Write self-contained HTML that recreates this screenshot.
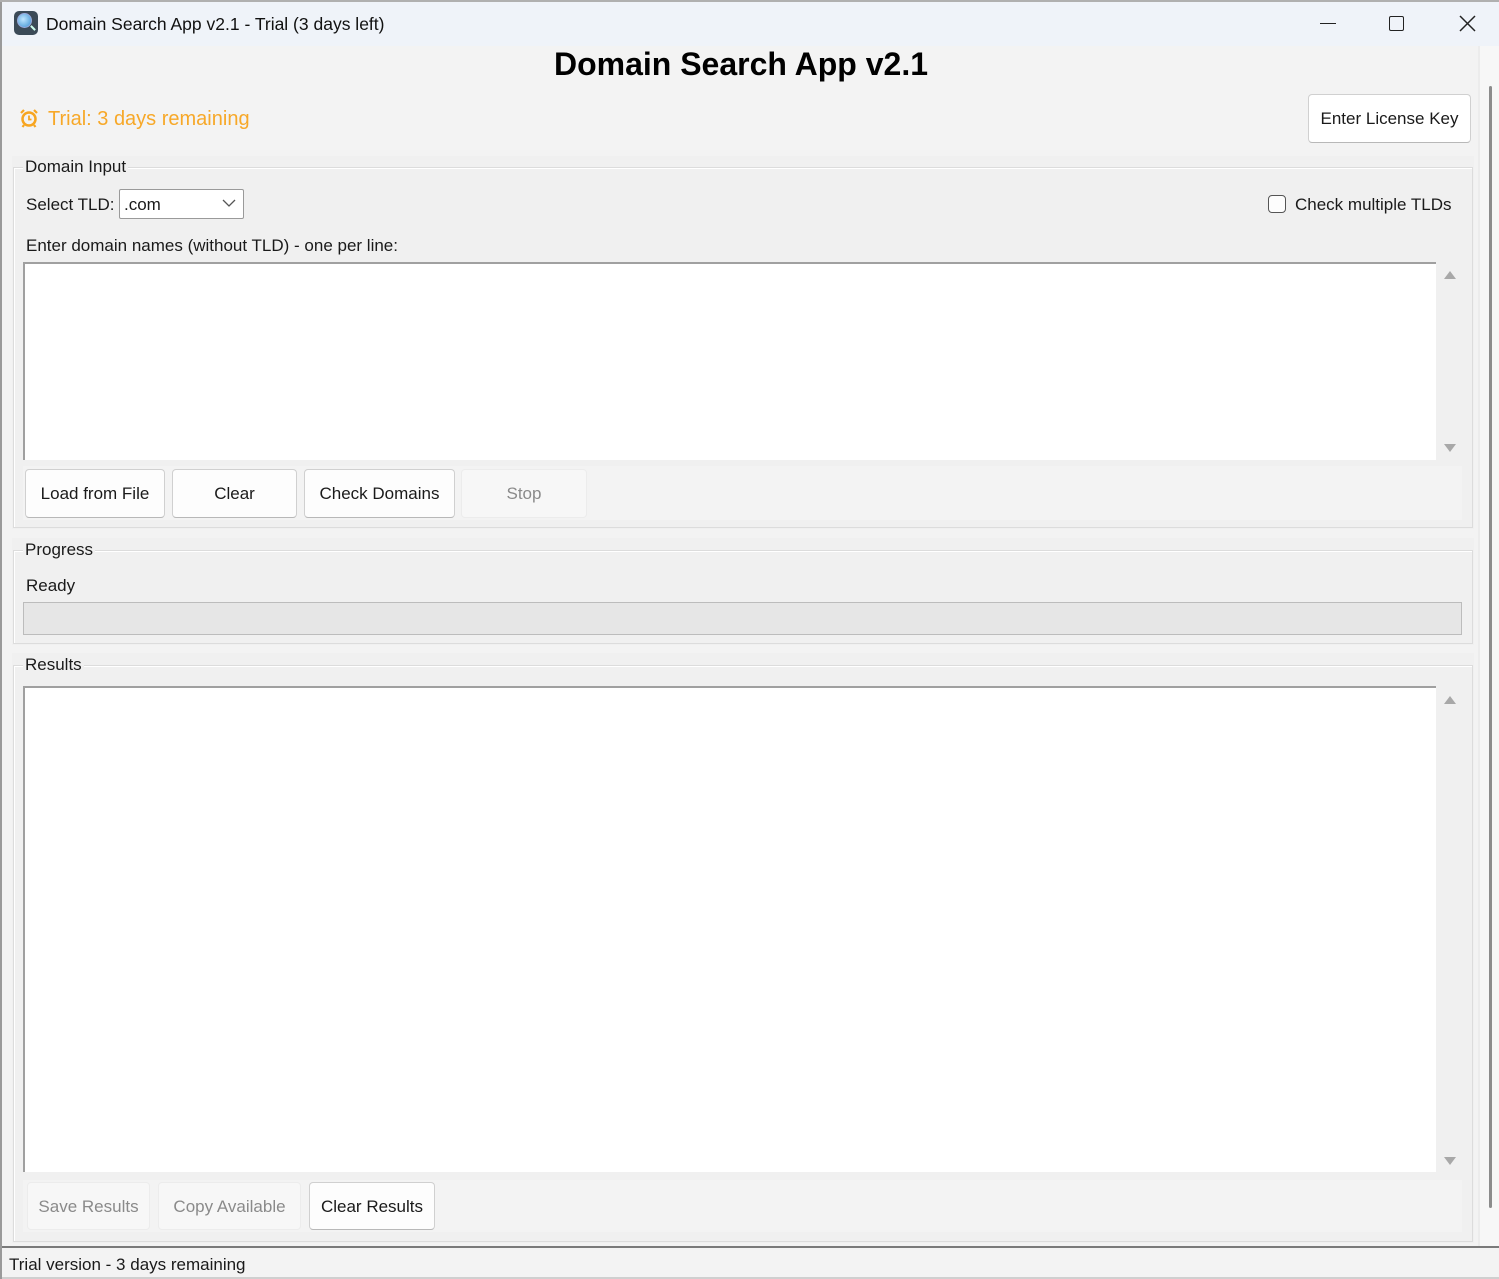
<!DOCTYPE html>
<html><head><meta charset="utf-8"><style>
*{box-sizing:border-box;margin:0;padding:0}
body{width:1499px;height:1279px;position:relative;overflow:hidden;background:#f7f7f7;font-family:"Liberation Sans",sans-serif;font-size:17px;color:#1a1a1a}
.a{position:absolute}
.t{position:absolute;white-space:nowrap;line-height:20px}
.btn{position:absolute;background:#fdfdfd;border:1px solid #d0d0d0;border-bottom-color:#b8b8b8;border-radius:4px;text-align:center;line-height:48px;font-size:17px;color:#1a1a1a}
.dis{background:#f7f7f7;border-color:#ececec;color:#8a8a8a}
.grp{position:absolute;border:1px solid #dcdcdc;box-shadow:inset 1px 1px 0 #fff}
.gl{position:absolute;background:#f0f0f0;padding:0 2px;line-height:20px;font-size:17px}
.ta{position:absolute;background:#fff;border-top:2px solid #a0a0a0;border-left:2px solid #a0a0a0}
.up{position:absolute;width:0;height:0;border-left:6px solid transparent;border-right:6px solid transparent;border-bottom:8px solid #a8a8a8}
.dn{position:absolute;width:0;height:0;border-left:6px solid transparent;border-right:6px solid transparent;border-top:8px solid #a8a8a8}
</style></head><body>
<div class="a" style="left:0;top:0;width:2px;height:1279px;background:#9a9a9a"></div>
<div class="a" style="left:0;top:0;width:1499px;height:2px;background:#b0b0b0"></div>
<div class="a" style="left:2px;top:2px;width:1497px;height:44px;background:#eff3f9"></div>
<div class="a" style="left:14px;top:11px;width:24px;height:24px;border-radius:5px;background:#3b4a57"></div>
<div class="a" style="left:17px;top:13px;width:15px;height:15px;border-radius:50%;background:radial-gradient(circle at 40% 40%,#bfe6ff,#3a8fd0);border:1px solid #9ad"></div>
<div class="a" style="left:30px;top:27px;width:6px;height:2px;background:#cfe;transform:rotate(45deg)"></div>
<div class="t" style="left:46px;top:14px;font-size:17.5px;color:#111">Domain Search App v2.1 - Trial (3 days left)</div>
<div class="a" style="left:1320px;top:23px;width:16px;height:1px;background:#222"></div>
<div class="a" style="left:1389px;top:16px;width:15px;height:15px;border:1.5px solid #222;border-radius:2px"></div>
<svg class="a" style="left:1459px;top:15px" width="17" height="17"><path d="M1 1L16 16M16 1L1 16" stroke="#222" stroke-width="1.5"/></svg>
<div class="a" style="left:2px;top:46px;width:1476px;height:1200px;background:#f3f3f3"></div>
<div class="a" style="left:1478px;top:46px;width:2px;height:1200px;background:#ececec"></div>
<div class="a" style="left:1489px;top:86px;width:3px;height:1122px;background:#8c8c8c;border-radius:2px"></div>
<div class="t" style="left:0;width:1482px;text-align:center;top:46px;font-size:32px;line-height:36px;font-weight:bold;color:#000">Domain Search App v2.1</div>
<svg class="a" style="left:19px;top:108px" width="20" height="20"><circle cx="10" cy="11" r="6.5" fill="none" stroke="#f7a520" stroke-width="2.5"/><path d="M10 7.5V11.5H12.5" stroke="#f7a520" stroke-width="1.8" fill="none"/><path d="M2 5L5 2M18 5L15 2M5 17L3.5 19M15 17L16.5 19" stroke="#f7a520" stroke-width="2.2"/></svg>
<div class="t" style="left:48px;top:108px;font-size:20px;line-height:22px;color:#f7a828">Trial: 3 days remaining</div>
<div class="btn" style="left:1308px;top:94px;width:163px;height:49px;background:#fff">Enter License Key</div>
<div class="a" style="left:12px;top:156px;width:1462px;height:373px;background:#f0f0f0"></div>
<div class="grp" style="left:13px;top:167px;width:1460px;height:361px"></div>
<div class="gl" style="left:23px;top:157px">Domain Input</div>
<div class="t" style="left:26px;top:195px">Select TLD:</div>
<div class="a" style="left:119px;top:189px;width:125px;height:30px;background:#fff;border:1px solid #9a9a9a;border-radius:2px"></div>
<div class="t" style="left:124px;top:195px">.com</div>
<svg class="a" style="left:222px;top:199px" width="14" height="9"><path d="M1 1L7 7L13 1" stroke="#555" stroke-width="1.3" fill="none"/></svg>
<div class="a" style="left:1268px;top:195px;width:18px;height:18px;border:1.5px solid #555;border-radius:4px;background:#fdfdfd"></div>
<div class="t" style="left:1295px;top:195px">Check multiple TLDs</div>
<div class="t" style="left:26px;top:236px">Enter domain names (without TLD) - one per line:</div>
<div class="ta" style="left:23px;top:262px;width:1413px;height:198px"></div>
<div class="up" style="left:1444px;top:271px"></div>
<div class="dn" style="left:1444px;top:444px"></div>
<div class="a" style="left:23px;top:466px;width:1439px;height:54px;background:#f3f3f3"></div>
<div class="btn" style="left:25px;top:469px;width:140px;height:49px">Load from File</div>
<div class="btn" style="left:172px;top:469px;width:125px;height:49px">Clear</div>
<div class="btn" style="left:304px;top:469px;width:151px;height:49px">Check Domains</div>
<div class="btn dis" style="left:461px;top:469px;width:126px;height:49px">Stop</div>
<div class="a" style="left:12px;top:538px;width:1462px;height:107px;background:#f0f0f0"></div>
<div class="grp" style="left:13px;top:550px;width:1460px;height:94px"></div>
<div class="gl" style="left:23px;top:540px">Progress</div>
<div class="t" style="left:26px;top:576px">Ready</div>
<div class="a" style="left:23px;top:602px;width:1439px;height:33px;background:#e6e6e6;border:1px solid #bcbcbc"></div>
<div class="a" style="left:12px;top:653px;width:1462px;height:590px;background:#f0f0f0"></div>
<div class="grp" style="left:13px;top:665px;width:1460px;height:577px"></div>
<div class="gl" style="left:23px;top:655px">Results</div>
<div class="ta" style="left:23px;top:686px;width:1413px;height:486px"></div>
<div class="up" style="left:1444px;top:696px"></div>
<div class="dn" style="left:1444px;top:1157px"></div>
<div class="a" style="left:23px;top:1180px;width:1439px;height:52px;background:#f3f3f3"></div>
<div class="btn dis" style="left:27px;top:1182px;width:123px;height:48px">Save Results</div>
<div class="btn dis" style="left:158px;top:1182px;width:143px;height:48px">Copy Available</div>
<div class="btn" style="left:309px;top:1182px;width:126px;height:48px">Clear Results</div>
<div class="a" style="left:2px;top:1246px;width:1497px;height:33px;background:#f3f3f3;border-top:2px solid #7a7a7a;border-bottom:2px solid #cfcfcf"></div>
<div class="t" style="left:9px;top:1255px">Trial version - 3 days remaining</div>
</body></html>
